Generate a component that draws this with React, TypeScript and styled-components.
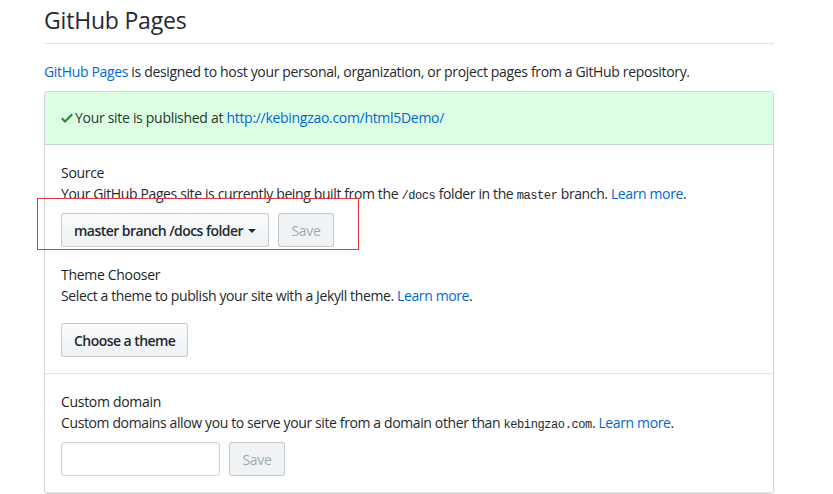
import React from "react";
import styled, { createGlobalStyle } from "styled-components";

const Global = createGlobalStyle`
  html, body { margin: 0; padding: 0; background: #fff; }
  body {
    font-family: "Open Sans", "Noto Sans", Arial, sans-serif;
    font-size: 14px;
    line-height: 1.5;
    color: #24292e;
  }
  * { box-sizing: border-box; }
`;

const Page = styled.div`
  width: 730px;
  margin-left: 44px;
  padding-top: 4px;
`;

const Subhead = styled.div`
  border-bottom: 1px solid #e1e4e8;
  padding-bottom: 7px;
  margin-bottom: 17px;
`;

const Title = styled.h2`
  margin: 0;
  font-size: 23px;
  font-weight: 400;
  line-height: 32px;
  letter-spacing: -0.2px;
`;

const Intro = styled.p`
  margin: 0 0 9px 0;
  letter-spacing: -0.34px;
`;

const Link = styled.a`
  color: #0366d6;
  text-decoration: none;
`;

const Box = styled.div`
  border: 1px solid #d1d5da;
  border-radius: 3px;
`;

const Flash = styled.div`
  background: #dcffe4;
  border-bottom: 1px solid #c3d9c8;
  padding: 15px 16px 16px 16px;
  color: #1d3b26;
  display: flex;
  align-items: center;
  gap: 2px;
  letter-spacing: -0.3px;
  line-height: 21px;
`;

const Section = styled.div<{ $last?: boolean }>`
  padding: 17px 16px 16px 16px;
  border-top: ${(p) => (p.$last ? "1px solid #e1e4e8" : "none")};
  border-bottom: ${(p) => (p.$last ? "1px solid #e1e4e8" : "none")};
`;

const Group = styled.div<{ $gap: number }>`
  & + & { margin-top: 17px; }
  display: flex;
  flex-direction: column;
  align-items: flex-start;
  & > :last-child { margin-top: ${(p) => p.$gap}px; }
`;

const Label = styled.div`
  font-size: 14px;
  line-height: 21px;
  color: #1b1f23;
  letter-spacing: -0.3px;
`;

const Note = styled.div`
  line-height: 21px;
  letter-spacing: -0.38px;
`;

const Code = styled.code`
  font-family: "Liberation Mono", "DejaVu Sans Mono", monospace;
  font-size: 12px;
  line-height: 1;
  letter-spacing: -0.4px;
`;

const Row = styled.div`
  position: relative;
  display: flex;
  gap: 9px;
`;

const Button = styled.button<{ $disabled?: boolean }>`
  font-family: inherit;
  font-size: 14px;
  font-weight: 600;
  letter-spacing: -0.55px;
  height: 34px;
  padding: 0 12px;
  border: 1px solid rgba(27, 31, 35, 0.2);
  border-radius: 3px;
  background: ${(p) =>
    p.$disabled ? "#eff3f6" : "linear-gradient(#fafbfc, #eff3f6 90%)"};
  color: ${(p) => (p.$disabled ? "rgba(36,41,46,0.4)" : "#24292e")};
  display: inline-flex;
  align-items: center;
  gap: 4px;
  cursor: pointer;
`;

const SaveButton = styled(Button)`
  font-weight: 400;
  letter-spacing: -0.3px;
  width: 56px;
  justify-content: center;
`;

const Caret = styled.span`
  display: inline-block;
  width: 0;
  height: 0;
  border-top: 4px solid #24292e;
  border-left: 4px solid transparent;
  border-right: 4px solid transparent;
  margin-left: 1px;
  margin-top: 2px;
`;

const Annotation = styled.div`
  position: absolute;
  left: -24px;
  top: -15px;
  width: 322px;
  height: 52px;
  border: 1px solid #e8383d;
  pointer-events: none;
`;

const Input = styled.input`
  width: 159px;
  height: 34px;
  border: 1px solid #d1d5da;
  border-radius: 3px;
  box-shadow: inset 0 1px 2px rgba(27, 31, 35, 0.075);
  background: #fff;
  font-family: inherit;
  font-size: 14px;
  padding: 6px 8px;
`;

const Check = () => (
  <svg width="12" height="16" viewBox="0 0 12 16" aria-hidden="true">
    <path fill="#22863a" fillRule="evenodd" d="M12 5l-8 8-4-4 1.5-1.5L4 10l6.5-6.5L12 5z" />
  </svg>
);

export default function App() {
  return (
    <>
      <Global />
      <Page>
        <Subhead>
          <Title>GitHub Pages</Title>
        </Subhead>
        <Intro>
          <Link href="#">GitHub Pages</Link> is designed to host your personal, organization, or project pages from a GitHub repository.
        </Intro>
        <Box>
          <Flash>
            <Check />
            <span>
              Your site is published at <Link href="#">http://kebingzao.com/html5Demo/</Link>
            </span>
          </Flash>
          <Section>
            <Group $gap={9}>
              <Label>Source</Label>
              <Note>
                Your GitHub Pages site is currently being built from the <Code>/docs</Code> folder in the <Code>master</Code> branch. <Link href="#">Learn more</Link>.
              </Note>
              <Row>
                <Annotation />
                <Button>
                  master branch /docs folder <Caret />
                </Button>
                <SaveButton $disabled>Save</SaveButton>
              </Row>
            </Group>
            <Group $gap={17}>
              <Label>Theme Chooser</Label>
              <Note>
                Select a theme to publish your site with a Jekyll theme. <Link href="#">Learn more</Link>.
              </Note>
              <Row>
                <Button>Choose a theme</Button>
              </Row>
            </Group>
          </Section>
          <Section $last>
            <Group $gap={9}>
              <Label>Custom domain</Label>
              <Note>
                Custom domains allow you to serve your site from a domain other than <Code>kebingzao.com</Code>. <Link href="#">Learn more</Link>.
              </Note>
              <Row>
                <Input type="text" />
                <SaveButton $disabled>Save</SaveButton>
              </Row>
            </Group>
          </Section>
        </Box>
      </Page>
    </>
  );
}
